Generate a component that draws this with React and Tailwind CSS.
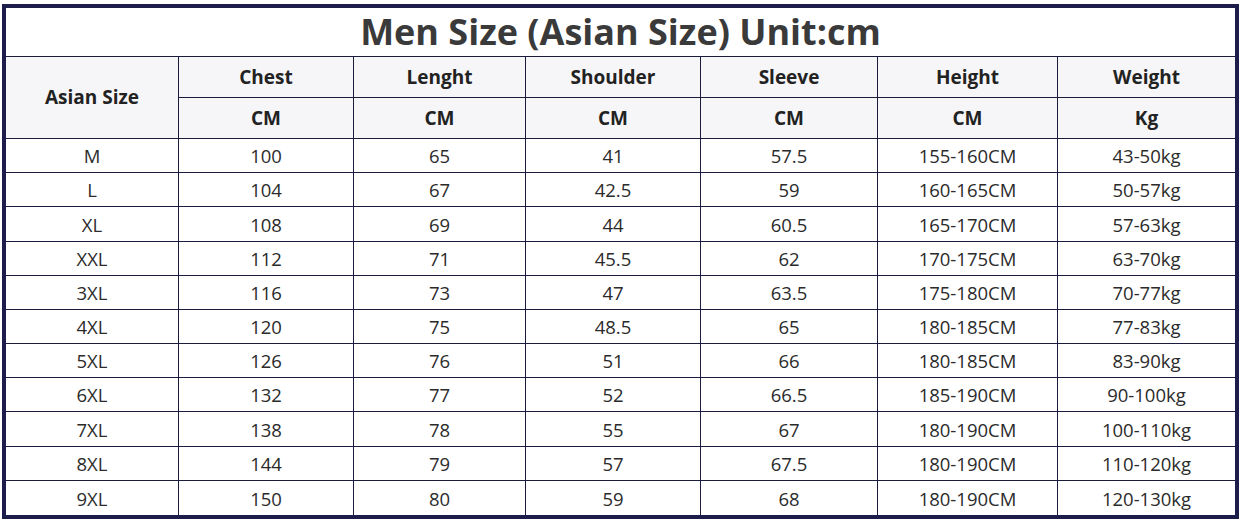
import React from "react";

const rows = [
  ["M", "100", "65", "41", "57.5", "155-160CM", "43-50kg"],
  ["L", "104", "67", "42.5", "59", "160-165CM", "50-57kg"],
  ["XL", "108", "69", "44", "60.5", "165-170CM", "57-63kg"],
  ["XXL", "112", "71", "45.5", "62", "170-175CM", "63-70kg"],
  ["3XL", "116", "73", "47", "63.5", "175-180CM", "70-77kg"],
  ["4XL", "120", "75", "48.5", "65", "180-185CM", "77-83kg"],
  ["5XL", "126", "76", "51", "66", "180-185CM", "83-90kg"],
  ["6XL", "132", "77", "52", "66.5", "185-190CM", "90-100kg"],
  ["7XL", "138", "78", "55", "67", "180-190CM", "100-110kg"],
  ["8XL", "144", "79", "57", "67.5", "180-190CM", "110-120kg"],
  ["9XL", "150", "80", "59", "68", "180-190CM", "120-130kg"],
];

const heads = ["Chest", "Lenght", "Shoulder", "Sleeve", "Height", "Weight"];
const units = ["CM", "CM", "CM", "CM", "CM", "Kg"];

const cell = "flex items-center justify-center border-[#1b1b3d]";
const head = "bg-[#f6f6f8] font-bold text-[19px] text-[#222]";

const App = () => {
  return (
    <div className="w-[1243px] h-[521px] bg-white pt-[4px] pl-[2px]" style={{ fontFamily: "'Open Sans', sans-serif" }}>
      <div className="w-[1237px] h-[515px] border-4 border-[#1d1d4c] bg-white flex flex-col">
        <div className="h-[49px] shrink-0 border-b border-[#1b1b3d] flex items-center justify-center">
          <h1 className="text-[36px] font-bold text-[#3a3a3a] leading-none">Men Size (Asian Size) Unit:cm</h1>
        </div>
        <div className="flex-1 grid grid-cols-[173px_175px_172px_175px_177px_180px_177px] grid-rows-[41px_41px_repeat(11,minmax(0,1fr))] text-[#2b2b2b]">
          <div className={`${cell} ${head} row-span-2 border-r border-b`}>Asian Size</div>
          {heads.map((h, i) => (
            <div key={h} className={`${cell} ${head} border-b ${i < 5 ? "border-r" : ""}`}>
              {h}
            </div>
          ))}
          {units.map((u, i) => (
            <div key={i} className={`${cell} ${head} border-b ${i < 5 ? "border-r" : ""}`}>
              {u}
            </div>
          ))}
          {rows.map((r, ri) =>
            r.map((v, ci) => (
              <div
                key={ri + "-" + ci}
                className={`${cell} text-[18.5px] pt-[1px] ${ci < 6 ? "border-r" : ""} ${ri < 10 ? "border-b" : ""}`}
              >
                {v}
              </div>
            ))
          )}
        </div>
      </div>
    </div>
  );
};

export default App;
